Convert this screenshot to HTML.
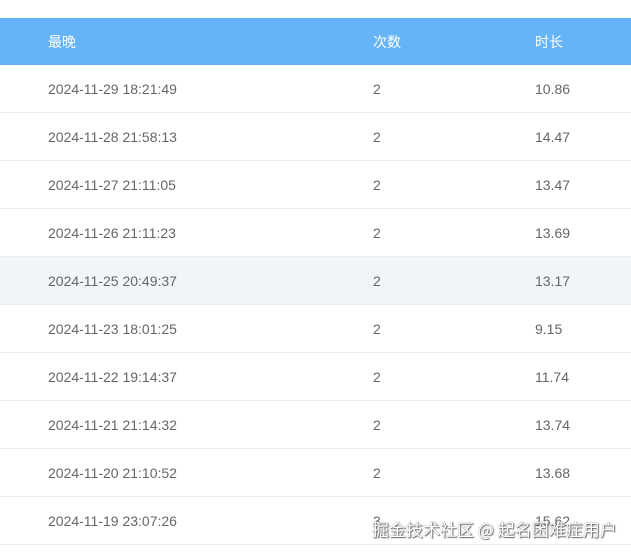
<!DOCTYPE html>
<html><head><meta charset="utf-8"><style>
body{margin:0;width:631px;height:555px;background:#fff;overflow:hidden;font-family:"Liberation Sans","Noto Sans CJK SC",sans-serif;position:relative}
.hd{position:absolute;top:18px;left:0;width:631px;height:47px;background:#66b4f8;color:#fff;font-size:14px}
.r{position:absolute;left:0;width:631px;height:47px;border-bottom:1px solid #ebeef5;color:#666;font-size:14px}
.c{position:absolute;top:1px;line-height:47px}
.a{left:48px}.b{left:373px}.d{left:535px}
.wm{position:absolute;left:372px;top:516px;font-size:17px;color:#fff;text-shadow:0 0 1px #555,1px 1px 1px #666;white-space:nowrap;font-family:"Noto Sans CJK SC",sans-serif}
</style></head><body>
<div class="hd"><span class="c a">最晚</span><span class="c b">次数</span><span class="c d">时长</span></div>
<div class="r" style="top:65px"><span class="c a">2024-11-29 18:21:49</span><span class="c b">2</span><span class="c d">10.86</span></div>
<div class="r" style="top:113px"><span class="c a">2024-11-28 21:58:13</span><span class="c b">2</span><span class="c d">14.47</span></div>
<div class="r" style="top:161px"><span class="c a">2024-11-27 21:11:05</span><span class="c b">2</span><span class="c d">13.47</span></div>
<div class="r" style="top:209px"><span class="c a">2024-11-26 21:11:23</span><span class="c b">2</span><span class="c d">13.69</span></div>
<div class="r" style="top:257px;background:#f0f5fa"><span class="c a">2024-11-25 20:49:37</span><span class="c b">2</span><span class="c d">13.17</span></div>
<div class="r" style="top:305px"><span class="c a">2024-11-23 18:01:25</span><span class="c b">2</span><span class="c d">9.15</span></div>
<div class="r" style="top:353px"><span class="c a">2024-11-22 19:14:37</span><span class="c b">2</span><span class="c d">11.74</span></div>
<div class="r" style="top:401px"><span class="c a">2024-11-21 21:14:32</span><span class="c b">2</span><span class="c d">13.74</span></div>
<div class="r" style="top:449px"><span class="c a">2024-11-20 21:10:52</span><span class="c b">2</span><span class="c d">13.68</span></div>
<div class="r" style="top:497px"><span class="c a">2024-11-19 23:07:26</span><span class="c b">3</span><span class="c d">15.62</span></div>
<div class="wm">掘金技术社区 @ 起名困难症用户</div>
</body></html>
